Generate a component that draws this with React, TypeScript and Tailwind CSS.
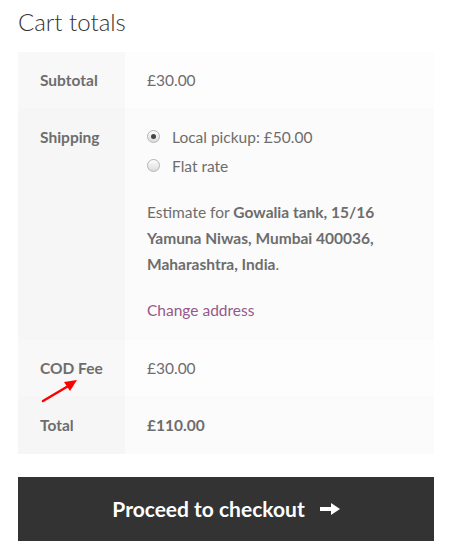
import React from 'react';

const Radio: React.FC<{ checked?: boolean }> = ({ checked }) => (
  <span className="relative inline-flex h-[13px] w-[13px] shrink-0 items-center justify-center rounded-full border border-[#b5b5b5] bg-gradient-to-b from-[#fdfdfd] to-[#dcdcdc]">
    {checked && <span className="h-[5px] w-[5px] rounded-full bg-[#444]"></span>}
  </span>
);

const CartTotals: React.FC = () => {
  return (
    <div className="min-h-[552px] w-[454px] bg-white pl-[18px] pr-[20px] pt-[5px] text-[#6d6d6d] font-['Lato',sans-serif]">
      <h2 className="mb-[14px] text-[24px] font-light leading-[33px] text-[#333]">Cart totals</h2>

      <div className="relative">
        <table className="w-full border-collapse text-[15.5px] leading-[26px]">
          <tbody>
            <tr>
              <th className="w-[107px] bg-[#f8f8f8] px-[22px] py-[15px] text-left align-top font-bold">Subtotal</th>
              <td className="bg-[#fdfdfd] px-[22px] py-[15px]">£30.00</td>
            </tr>
            <tr>
              <th className="bg-[#f6f6f6] px-[22px] pt-[16px] text-left align-top font-bold">Shipping</th>
              <td className="bg-[#fbfbfb] px-[22px] pt-[14px] pb-[17px]">
                <ul>
                  <li className="flex h-[29px] items-center gap-[12px]">
                    <Radio checked />
                    <span>Local pickup: £50.00</span>
                  </li>
                  <li className="flex h-[29px] items-center gap-[12px]">
                    <Radio />
                    <span>Flat rate</span>
                  </li>
                </ul>
                <p className="mt-[19px] leading-[26px]">
                  Estimate for <strong>Gowalia tank, 15/16 Yamuna Niwas, Mumbai 400036, Maharashtra, India</strong>.
                </p>
                <a className="mt-[20px] block text-[#96588a]">Change address</a>
              </td>
            </tr>
            <tr>
              <th className="bg-[#f8f8f8] px-[22px] py-[15px] text-left align-top font-bold">COD Fee</th>
              <td className="bg-[#fdfdfd] px-[22px] py-[15px]">£30.00</td>
            </tr>
            <tr>
              <th className="bg-[#f6f6f6] px-[22px] py-[16px] text-left align-top font-bold">Total</th>
              <td className="bg-[#fbfbfb] px-[22px] py-[16px] font-bold">£110.00</td>
            </tr>
          </tbody>
        </table>

        <svg className="absolute left-[22px] top-[326px]" width="40" height="26" viewBox="0 0 40 26">
          <line x1="3" y1="23" x2="30" y2="7" stroke="#f00" strokeWidth="2.5" strokeLinecap="round" />
          <polygon points="37,2 24,4 30,13" fill="#f00" />
        </svg>
      </div>

      <button className="mt-[23px] flex h-[64px] w-full items-center justify-center gap-[15px] bg-[#333] text-[21px] font-bold text-white">
        <span>Proceed to checkout</span>
        <svg width="20" height="12" viewBox="0 0 20 12">
          <rect x="0" y="4" width="12" height="4" fill="#fff" />
          <polygon points="11,0 20,6 11,12" fill="#fff" />
        </svg>
      </button>
    </div>
  );
};

export default function App() {
  return <CartTotals />;
}
